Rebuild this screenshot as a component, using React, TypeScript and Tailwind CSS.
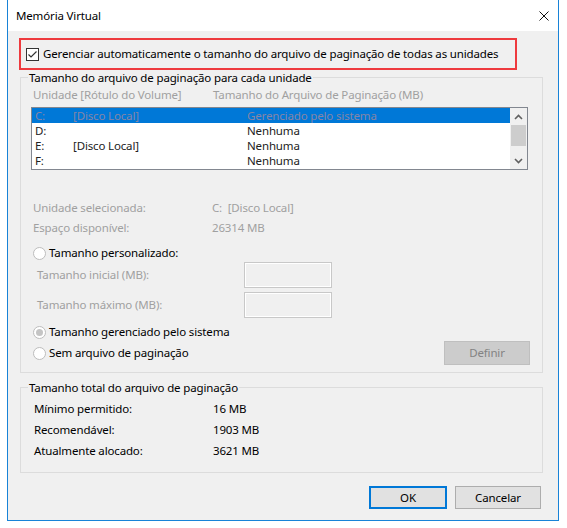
import React from "react"

function CheckIcon() {
  return (
    <svg width="13" height="13" viewBox="0 0 13 13" className="shrink-0">
      <rect x="0.5" y="0.5" width="12" height="12" fill="#fff" stroke="#333" />
      <path d="M2.5 6.5 L5 9 L10.5 3.5" fill="none" stroke="#333" strokeWidth="1.2" />
    </svg>
  )
}

function Radio({ checked }: { checked?: boolean }) {
  return (
    <svg width="13" height="13" viewBox="0 0 13 13" className="shrink-0">
      <circle cx="6.5" cy="6.5" r="6" fill="#fff" stroke="#bcbcbc" />
      {checked && <circle cx="6.5" cy="6.5" r="3.5" fill="#c4c4c4" />}
    </svg>
  )
}

function Chevron({ up }: { up?: boolean }) {
  return (
    <svg width="9" height="6" viewBox="0 0 9 6">
      <path d={up ? "M1 5 L4.5 1.5 L8 5" : "M1 1 L4.5 4.5 L8 1"} fill="none" stroke="#606060" strokeWidth="1.6" />
    </svg>
  )
}

const drives = [
  { letter: "C:", label: "[Disco Local]", size: "Gerenciado pelo sistema", selected: true },
  { letter: "D:", label: "", size: "Nenhuma" },
  { letter: "E:", label: "[Disco Local]", size: "Nenhuma" },
  { letter: "F:", label: "", size: "Nenhuma" },
]

export default function App() {
  return (
    <div className="w-[567px] h-[528px] bg-white pl-[7px] font-['Noto_Sans',sans-serif] text-[11.5px] tracking-[-0.15px] text-black">
      <div className="w-[552px] h-[521px] border-x border-b border-[#1883d7] bg-[#f0f0f0] flex flex-col">

        {/* title bar */}
        <div className="h-[31px] bg-white flex items-center justify-between pl-[8px] pr-[9px]">
          <span>Memória Virtual</span>
          <svg width="10" height="10" viewBox="0 0 10 10">
            <path d="M0.5 0.5 L9.5 9.5 M9.5 0.5 L0.5 9.5" stroke="#111" strokeWidth="1" />
          </svg>
        </div>

        {/* auto manage */}
        <div className="mt-[7px] ml-[11px] w-[498px] h-[32px] border-2 border-[#ee3a3e] flex items-center pl-[5px] gap-[4px]">
          <CheckIcon />
          <span className="whitespace-nowrap">Gerenciar automaticamente o tamanho do arquivo de paginação de todas as unidades</span>
        </div>

        {/* per drive */}
        <fieldset className="ml-[12px] w-[523px] border border-[#dcdcdc] pl-[10px] pr-[12px] pb-[7px]">
          <legend className="ml-[-3px] px-[1px] leading-[15px]">Tamanho do arquivo de paginação para cada unidade</legend>

          <div className="mt-[2px] h-[16px] flex items-center pl-[2px] text-[#a0a0a0]">
            <span className="w-[180px]">Unidade [Rótulo do Volume]</span>
            <span>Tamanho do Arquivo de Paginação (MB)</span>
          </div>

          <div className="mt-[4px] w-[497px] h-[63px] border border-[#828790] bg-white flex">
            <div className="flex-1 flex flex-col">
              {drives.map((d) => (
                <div
                  key={d.letter}
                  className={`h-[15px] flex items-center pl-[3px] ${d.selected ? "bg-[#0078d7] text-[#8585a6]" : "text-[#222]"}`}
                >
                  <span className="w-[38px]">{d.letter}</span>
                  <span className="w-[174px]">{d.label}</span>
                  <span>{d.size}</span>
                </div>
              ))}
            </div>
            <div className="w-[17px] bg-[#f0f0f0] flex flex-col items-center">
              <div className="h-[17px] flex items-center justify-center"><Chevron up /></div>
              <div className="w-[15px] h-[21px] bg-[#cdcdcd]" />
              <div className="flex-1" />
              <div className="h-[17px] flex items-center justify-center"><Chevron /></div>
            </div>
          </div>

          <div className="mt-[30px] h-[16px] flex items-center pl-[2px] text-[#a0a0a0]">
            <span className="w-[179px]">Unidade selecionada:</span>
            <span>C:&nbsp; [Disco Local]</span>
          </div>
          <div className="mt-[4px] h-[16px] flex items-center pl-[2px] text-[#a0a0a0]">
            <span className="w-[179px]">Espaço disponível:</span>
            <span>26314 MB</span>
          </div>

          <div className="mt-[9px] h-[16px] flex items-center pl-[2px] gap-[3px]">
            <Radio />
            <span>Tamanho personalizado:</span>
          </div>
          <div className="mt-[1px] h-[26px] flex items-center pl-[6px] text-[#a0a0a0]">
            <span className="w-[207px]">Tamanho inicial (MB):</span>
            <div className="w-[88px] h-[26px] border border-[#c8c8c8] shadow-[inset_0_0_0_1px_#ffffff]" />
          </div>
          <div className="mt-[4px] h-[26px] flex items-center pl-[6px] text-[#a0a0a0]">
            <span className="w-[207px]">Tamanho máximo (MB):</span>
            <div className="w-[88px] h-[26px] border border-[#c8c8c8] shadow-[inset_0_0_0_1px_#ffffff]" />
          </div>

          <div className="mt-[6px] h-[16px] flex items-center pl-[2px] gap-[3px]">
            <Radio checked />
            <span>Tamanho gerenciado pelo sistema</span>
          </div>
          <div className="mt-[1px] h-[24px] flex items-center justify-between pl-[2px]">
            <div className="flex items-center gap-[3px]">
              <Radio />
              <span>Sem arquivo de paginação</span>
            </div>
            <button className="w-[86px] h-[24px] bg-[#cccccc] border border-[#bfbfbf] text-[#838383]">Definir</button>
          </div>
        </fieldset>

        {/* totals */}
        <fieldset className="mt-[7px] ml-[12px] w-[523px] border border-[#dcdcdc] pl-[13px] pb-[11px]">
          <legend className="ml-[-6px] px-[1px] leading-[15px]">Tamanho total do arquivo de paginação</legend>
          <div className="mt-[3px] flex flex-col">
            {[
              ["Mínimo permitido:", "16 MB"],
              ["Recomendável:", "1903 MB"],
              ["Atualmente alocado:", "3621 MB"],
            ].map(([k, v]) => (
              <div key={k} className="h-[21px] flex items-center">
                <span className="w-[179px]">{k}</span>
                <span>{v}</span>
              </div>
            ))}
          </div>
        </fieldset>

        {/* buttons */}
        <div className="mt-[13px] flex justify-end gap-[8px] pr-[17px]">
          <button className="w-[78px] h-[23px] bg-[#e1e1e1] border-2 border-[#0078d7]">OK</button>
          <button className="w-[86px] h-[23px] bg-[#e1e1e1] border border-[#adadad]">Cancelar</button>
        </div>
      </div>
    </div>
  )
}
